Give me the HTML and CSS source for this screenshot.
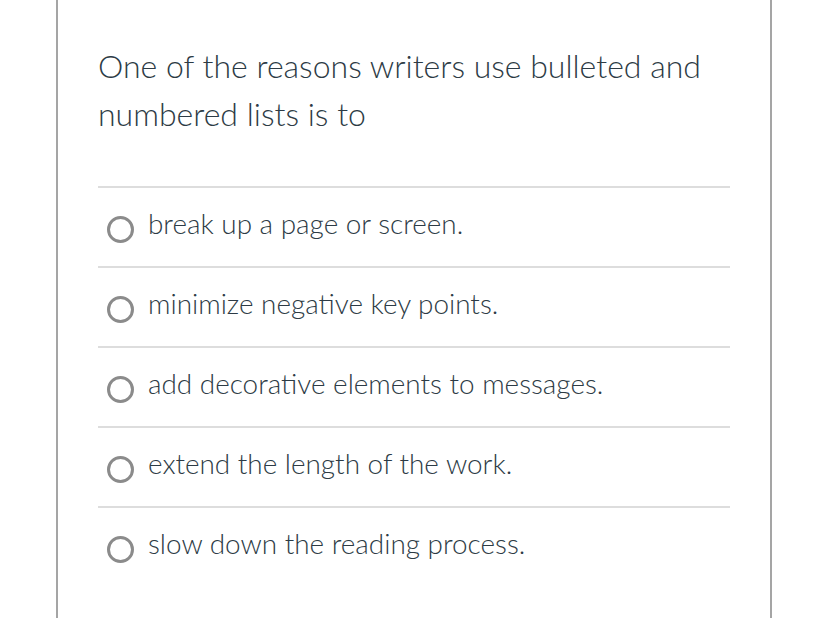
FILE: index.html
```html
<!DOCTYPE html>
<html>
<head>
<meta charset="utf-8">
<link rel="stylesheet" href="styles.css">
</head>
<body>
<div class="page">
  <div class="card">
    <div class="question">One of the reasons writers use bulleted and numbered lists is to</div>
    <ul class="answers">
      <li class="answer"><span class="radio"></span><span class="label">break up a page or screen.</span></li>
      <li class="answer"><span class="radio"></span><span class="label">minimize negative key points.</span></li>
      <li class="answer"><span class="radio"></span><span class="label">add decorative elements to messages.</span></li>
      <li class="answer"><span class="radio"></span><span class="label">extend the length of the work.</span></li>
      <li class="answer"><span class="radio"></span><span class="label">slow down the reading process.</span></li>
    </ul>
  </div>
</div>
</body>
</html>
```

FILE: styles.css
```css
html, body {
  margin: 0;
  padding: 0;
  background: #ffffff;
  height: 100%;
  overflow: hidden;
}
.page {
  padding-left: 56px;
  width: 716px;
  height: 100%;
}
.card {
  border-left: 2px solid #a5a5a5;
  border-right: 2px solid #a5a5a5;
  height: 100%;
  padding: 42px 40px 0 40px;
  box-sizing: border-box;
  font-family: Lato, "Open Sans", sans-serif;
  font-weight: 300;
  color: #2d3b45;
}
.question {
  font-size: 32px;
  line-height: 48px;
  width: 632px;
}
.answers {
  list-style: none;
  margin: 48px 0 0 0;
  padding: 0;
}
.answer {
  border-top: 2px solid #dddddd;
  height: 78px;
  display: flex;
  align-items: center;
  gap: 14px;
  padding-left: 9px;
}
.radio {
  width: 21px;
  height: 21px;
  border: 3px solid #8b8b8b;
  border-radius: 50%;
  flex: none;
  margin-top: 4px;
}
.label {
  font-size: 27.9px;
  margin-top: -8px;
}
```
